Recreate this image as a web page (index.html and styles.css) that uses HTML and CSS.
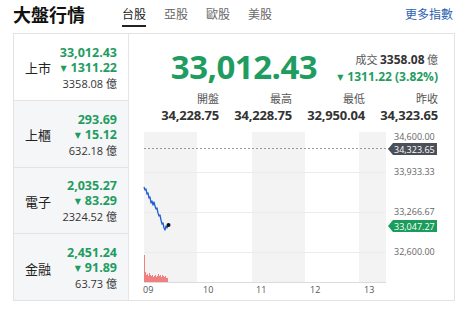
FILE: index.html
```html
<!DOCTYPE html>
<html lang="zh-Hant">
<head>
<meta charset="utf-8">
<link rel="stylesheet" href="styles.css">
</head>
<body>
<header class="header">
  <h1 class="title">大盤行情</h1>
  <nav class="tabs">
    <span class="tab active">台股</span>
    <span class="tab">亞股</span>
    <span class="tab">歐股</span>
    <span class="tab">美股</span>
  </nav>
  <a class="more">更多指數</a>
</header>
<section class="card">
  <ul class="markets">
    <li class="market current">
      <span class="m-name">上市</span>
      <span class="m-vals">
        <b class="m-price">33,012.43</b>
        <b class="m-chg"><span class="tri">▼</span>1311.22</b>
        <span class="m-vol">3358.08 億</span>
      </span>
    </li>
    <li class="market">
      <span class="m-name">上櫃</span>
      <span class="m-vals">
        <b class="m-price">293.69</b>
        <b class="m-chg"><span class="tri">▼</span>15.12</b>
        <span class="m-vol">632.18 億</span>
      </span>
    </li>
    <li class="market">
      <span class="m-name">電子</span>
      <span class="m-vals">
        <b class="m-price">2,035.27</b>
        <b class="m-chg"><span class="tri">▼</span>83.29</b>
        <span class="m-vol">2324.52 億</span>
      </span>
    </li>
    <li class="market">
      <span class="m-name">金融</span>
      <span class="m-vals">
        <b class="m-price">2,451.24</b>
        <b class="m-chg"><span class="tri">▼</span>91.89</b>
        <span class="m-vol">63.73 億</span>
      </span>
    </li>
  </ul>
  <div class="detail">
    <div class="summary">
      <div class="big">33,012.43</div>
      <div class="side">
        <div class="turnover">成交 <b>3358.08</b> 億</div>
        <div class="change"><span class="tri">▼</span>1311.22 (3.82%)</div>
      </div>
    </div>
    <div class="stats">
      <div class="stat"><span class="s-label">開盤</span><b class="s-val">34,228.75</b></div>
      <div class="stat"><span class="s-label">最高</span><b class="s-val">34,228.75</b></div>
      <div class="stat"><span class="s-label">最低</span><b class="s-val">32,950.04</b></div>
      <div class="stat"><span class="s-label">昨收</span><b class="s-val">34,323.65</b></div>
    </div>
    <svg class="chart" width="325" height="172" viewBox="0 0 325 172">
      <rect x="15" y="4" width="53" height="150" fill="#f3f3f3"/>
      <rect x="123" y="4" width="53" height="150" fill="#f3f3f3"/>
      <rect x="230" y="4" width="27" height="150" fill="#f3f3f3"/>
      <g stroke="#ebebeb" stroke-width="1">
        <line x1="15" y1="44.5" x2="257" y2="44.5"/>
        <line x1="15" y1="84.5" x2="257" y2="84.5"/>
        <line x1="15" y1="124.5" x2="257" y2="124.5"/>
      </g>
      <line x1="15" y1="154.5" x2="257" y2="154.5" stroke="#dcdcdc"/>
      <line x1="15" y1="20.5" x2="260" y2="20.5" stroke="#9a9a9a" stroke-dasharray="2 2"/>
      <g fill="#f08080">
        <rect x="15" y="127" width="1" height="27"/>
        <rect x="16" y="144" width="1" height="10"/>
        <rect x="17" y="147" width="1" height="7"/>
        <rect x="18" y="146" width="1" height="8"/>
        <rect x="19" y="148" width="1" height="6"/>
        <rect x="20" y="145" width="1" height="9"/>
        <rect x="21" y="147" width="1" height="7"/>
        <rect x="22" y="148" width="1" height="6"/>
        <rect x="23" y="147" width="1" height="7"/>
        <rect x="24" y="149" width="1" height="5"/>
        <rect x="25" y="148" width="1" height="6"/>
        <rect x="26" y="147" width="1" height="7"/>
        <rect x="27" y="149" width="1" height="5"/>
        <rect x="28" y="148" width="1" height="6"/>
        <rect x="29" y="146" width="1" height="8"/>
        <rect x="30" y="148" width="1" height="6"/>
        <rect x="31" y="147" width="1" height="7"/>
        <rect x="32" y="149" width="1" height="5"/>
        <rect x="33" y="147" width="1" height="7"/>
        <rect x="34" y="148" width="1" height="6"/>
        <rect x="35" y="149" width="1" height="5"/>
        <rect x="36" y="148" width="1" height="6"/>
        <rect x="37" y="150" width="1" height="4"/>
        <rect x="38" y="150" width="1" height="4"/>
      </g>
      <polyline fill="none" stroke="#1f5fd1" stroke-width="1.3" stroke-linejoin="round"
        points="15,59 16,62 17,61 18,66 19,65 20,70 21,69 22,75 23,73 24,77 25,74 26,78 27,81 28,80 29,85 30,88 31,87 32,92 33,96 34,95 35,100 36,102 37,98 38,100 39,97"/>
      <circle cx="39.5" cy="97" r="2" fill="#111"/>
      <g font-size="9" fill="#555" font-family="'Open Sans', sans-serif">
        <text x="14" y="165">09</text>
        <text x="74" y="165">10</text>
        <text x="127" y="165">11</text>
        <text x="181" y="165">12</text>
        <text x="235" y="165">13</text>
      </g>
      <g font-size="9" fill="#666" font-family="'Open Sans', sans-serif">
        <text x="265" y="12">34,600.00</text>
        <text x="265" y="47">33,933.33</text>
        <text x="265" y="87">33,266.67</text>
        <text x="265" y="127">32,600.00</text>
      </g>
      <polygon points="259,21 264,15 308,15 308,27 264,27" fill="#4b5058"/>
      <text x="265" y="24.5" font-size="9" fill="#fff" font-family="'Open Sans', sans-serif">34,323.65</text>
      <polygon points="259,98 264,92 308,92 308,104 264,104" fill="#1a9c5b"/>
      <text x="265" y="101.5" font-size="9" fill="#fff" font-family="'Open Sans', sans-serif">33,047.27</text>
    </svg>
  </div>
</section>
</body>
</html>
```
FILE: styles.css
```css
* { box-sizing: border-box; }
body {
  margin: 0;
  background: #fff;
  font-family: "Open Sans", "Noto Sans CJK TC", sans-serif;
  color: #222;
}
.header {
  display: flex;
  align-items: flex-start;
  height: 33px;
  margin: 0 14px 0 13px;
}
.title {
  margin: 0;
  font-size: 18px;
  line-height: 28px;
  font-weight: 700;
  color: #111;
  font-family: "Noto Sans CJK TC", sans-serif;
}
.tabs {
  display: flex;
  gap: 18px;
  margin-left: 37px;
}
.tab {
  font-size: 12px;
  line-height: 16px;
  padding-top: 6px;
  height: 27px;
  border-bottom: 2px solid transparent;
  color: #666;
  font-family: "Noto Sans CJK TC", sans-serif;
}
.tab.active {
  color: #222;
  border-bottom-color: #222;
}
.more {
  margin-left: auto;
  font-size: 12px;
  line-height: 16px;
  padding-top: 6px;
  color: #2c5fb3;
  font-family: "Noto Sans CJK TC", sans-serif;
}
.card {
  display: flex;
  width: 442px;
  height: 268px;
  margin-left: 13px;
  border: 1px solid #e3e3e3;
}
.markets {
  list-style: none;
  margin: 0;
  padding: 0;
  width: 115px;
  display: flex;
  flex-direction: column;
  border-right: 1px solid #e6e6e6;
}
.market {
  flex: 1;
  display: flex;
  align-items: center;
  justify-content: space-between;
  padding: 2px 11px 0 11px;
  background: #f5f6f7;
  border-bottom: 1px solid #e3e3e3;
}
.market:last-child { border-bottom: 0; }
.market.current { background: #fff; }
.m-name {
  font-size: 13px;
  color: #222;
  font-family: "Noto Sans CJK TC", sans-serif;
}
.m-vals {
  display: flex;
  flex-direction: column;
  align-items: flex-end;
}
.m-price, .m-chg {
  font-size: 12.5px;
  line-height: 15px;
  font-weight: 700;
  color: #1f9d61;
}
.tri {
  font-size: 8px;
  margin-right: 4px;
  vertical-align: 1px;
  font-family: "DejaVu Sans", sans-serif;
}
.m-vol {
  font-size: 11px;
  line-height: 15px;
  color: #333;
}
.detail {
  flex: 1;
  display: flex;
  flex-direction: column;
}
.summary {
  display: flex;
  align-items: center;
  justify-content: flex-end;
  height: 58px;
  padding: 8px 16px 0 0;
  gap: 20px;
}
.big {
  font-size: 33px;
  line-height: 40px;
  font-weight: 700;
  letter-spacing: -0.5px;
  color: #1f9d61;
}
.side {
  display: flex;
  flex-direction: column;
  align-items: flex-end;
  padding-top: 2px;
}
.turnover {
  font-size: 11px;
  line-height: 17px;
  color: #555;
  font-family: "Noto Sans CJK TC", sans-serif;
}
.turnover b {
  font-family: "Open Sans", sans-serif;
  font-size: 12px;
  color: #333;
}
.change {
  font-size: 12px;
  line-height: 17px;
  font-weight: 700;
  color: #1f9d61;
}
.stats {
  display: grid;
  grid-template-columns: repeat(4, 73px);
  justify-content: end;
  height: 36px;
  padding-right: 16px;
}
.stat {
  display: flex;
  flex-direction: column;
  align-items: flex-end;
  gap: 2px;
}
.s-label {
  font-size: 11px;
  line-height: 13px;
  color: #555;
  font-family: "Noto Sans CJK TC", sans-serif;
}
.s-val {
  font-size: 13px;
  line-height: 16px;
  font-weight: 700;
  letter-spacing: -0.2px;
  color: #333;
}
.chart { display: block; }
```
